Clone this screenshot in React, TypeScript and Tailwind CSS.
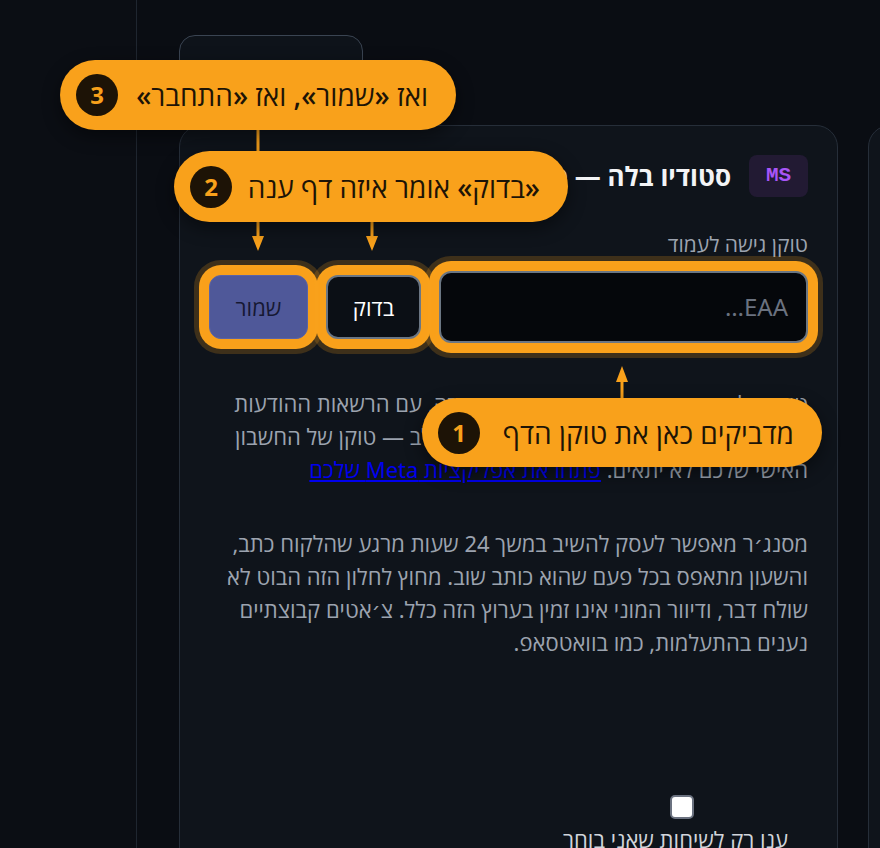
import React from "react";

const font = { fontFamily: '"Noto Sans", "Open Sans", "DejaVu Sans", sans-serif' };

function Callout({ n, text, className }: { n: number; text: string; className: string }) {
    return (
        <div
            dir="rtl"
            className={`absolute flex items-center justify-between rounded-full bg-[#f9a11b] pr-[28px] pl-[16px] shadow-[0_6px_18px_rgba(0,0,0,0.45)] ${className}`}
        >
            <span className="text-[28px] font-medium text-[#1d1406] whitespace-nowrap">{text}</span>
            <span className="flex h-[42px] w-[42px] items-center justify-center rounded-full bg-[#1d1306] text-[24px] font-bold text-[#f9a11b]">
                {n}
            </span>
        </div>
    );
}

const ring =
    "shadow-[0_0_0_7px_rgba(249,161,27,0.2),0_0_0_10px_#f9a11b,0_0_0_15px_rgba(249,161,27,0.2)]";

export default function App() {
    return (
        <div style={font} className="relative flex h-[848px] w-[880px] overflow-hidden bg-[#0a0d13]">
            <div className="h-full w-[137px] shrink-0 border-r border-[#1f2630] bg-[#0b0e14]" />

            <div className="flex-1 pl-[42px] pt-[35px]">
                <div className="h-[80px] w-[184px] rounded-2xl border border-[#3a4452] bg-[#0e131a]" />

                <div className="mt-[10px] flex gap-[30px]">
                    <div
                        dir="rtl"
                        className="h-[800px] w-[659px] shrink-0 rounded-[22px] border border-[#262e39] bg-[#0f141b] px-[29px] pt-[29px]"
                    >
                        <div className="flex items-center gap-[18px]">
                            <div className="flex h-[42px] w-[59px] items-center justify-center rounded-lg bg-[#221a33] font-['Liberation_Mono',monospace] text-[21px] font-bold text-[#a855f7]">
                                MS
                            </div>
                            <div className="text-[26px] font-bold text-[#f3f4f6]">סטודיו בלה — סלון יופי</div>
                        </div>

                        <div className="mt-[32px] text-[21px] leading-[30px] text-[#9ca3af]">טוקן גישה לעמוד</div>

                        <div className="mt-[12px] flex items-center gap-[18px]">
                            <div
                                className={`flex h-[72px] flex-1 items-center rounded-xl border-2 border-[#6b7683] bg-[#05070b] px-[18px] text-[24px] text-[#6b7280] ${ring}`}
                            >
                                EAA…
                            </div>
                            <div
                                className={`flex h-[64px] w-[95px] items-center justify-center rounded-xl border-2 border-[#6b7683] bg-[#0b0f15] text-[22px] text-white ${ring}`}
                            >
                                בדוק
                            </div>
                            <div
                                className={`flex h-[64px] w-[99px] items-center justify-center rounded-xl border border-[#5a63a6] bg-[#4f5899] text-[22px] font-medium text-[#161833] ${ring}`}
                            >
                                שמור
                            </div>
                        </div>

                        <div className="mt-[44px] text-[22px] leading-[33px] text-[#9ca3af] whitespace-nowrap">
                            <div>טוקן של עמוד הפייסבוק שמייצג את החברה, עם הרשאות ההודעות</div>
                            <div>של הדף עצמו ולא טוקן משתמש רגיל. שימו לב — טוקן של החשבון</div>
                            <div>
                                האישי שלכם לא יתאים.{" "}
                                <a href="#" className="text-[#0000ee] underline">
                                    פתחו את אפליקציות Meta שלכם
                                </a>
                            </div>
                        </div>

                        <div className="mt-[41px] text-[22px] leading-[33px] text-[#9ca3af] whitespace-nowrap">
                            <div>מסנג׳ר מאפשר לעסק להשיב במשך 24 שעות מרגע שהלקוח כתב,</div>
                            <div>והשעון מתאפס בכל פעם שהוא כותב שוב. מחוץ לחלון הזה הבוט לא</div>
                            <div>שולח דבר, ודיוור המוני אינו זמין בערוץ הזה כלל. צ׳אטים קבוצתיים</div>
                            <div>נענים בהתעלמות, כמו בוואטסאפ.</div>
                        </div>

                        <div className="mt-[136px] flex pr-[114px]">
                            <div className="h-[24px] w-[24px] rounded-[5px] border-2 border-[#6b7280] bg-white" />
                        </div>
                        <div className="mt-[4px] pr-[20px] text-[22px] text-[#d1d5db]">ענו רק לשיחות שאני בוחר</div>
                    </div>

                    <div className="h-[800px] w-[300px] shrink-0 rounded-[22px] border border-[#262e39] bg-[#0f141b]" />
                </div>
            </div>

            <svg className="pointer-events-none absolute inset-0" width="880" height="848">
                <g fill="#f9a11b" stroke="none">
                    <rect x="256.5" y="128" width="3" height="112" />
                    <polygon points="252,236 264,236 258,251" />
                    <rect x="370.5" y="220" width="3" height="20" />
                    <polygon points="366,236 378,236 372,251" />
                    <rect x="620.5" y="378" width="3" height="22" />
                    <polygon points="616,382 628,382 622,366" />
                </g>
            </svg>

            <Callout n={3} text="ואז «שמור», ואז «התחבר»" className="left-[60px] top-[60px] h-[70px] w-[396px]" />
            <Callout n={2} text="«בדוק» אומר איזה דף ענה" className="left-[174px] top-[151px] h-[71px] w-[394px]" />
            <Callout n={1} text="מדביקים כאן את טוקן הדף" className="left-[422px] top-[398px] h-[69px] w-[400px]" />
        </div>
    );
}
